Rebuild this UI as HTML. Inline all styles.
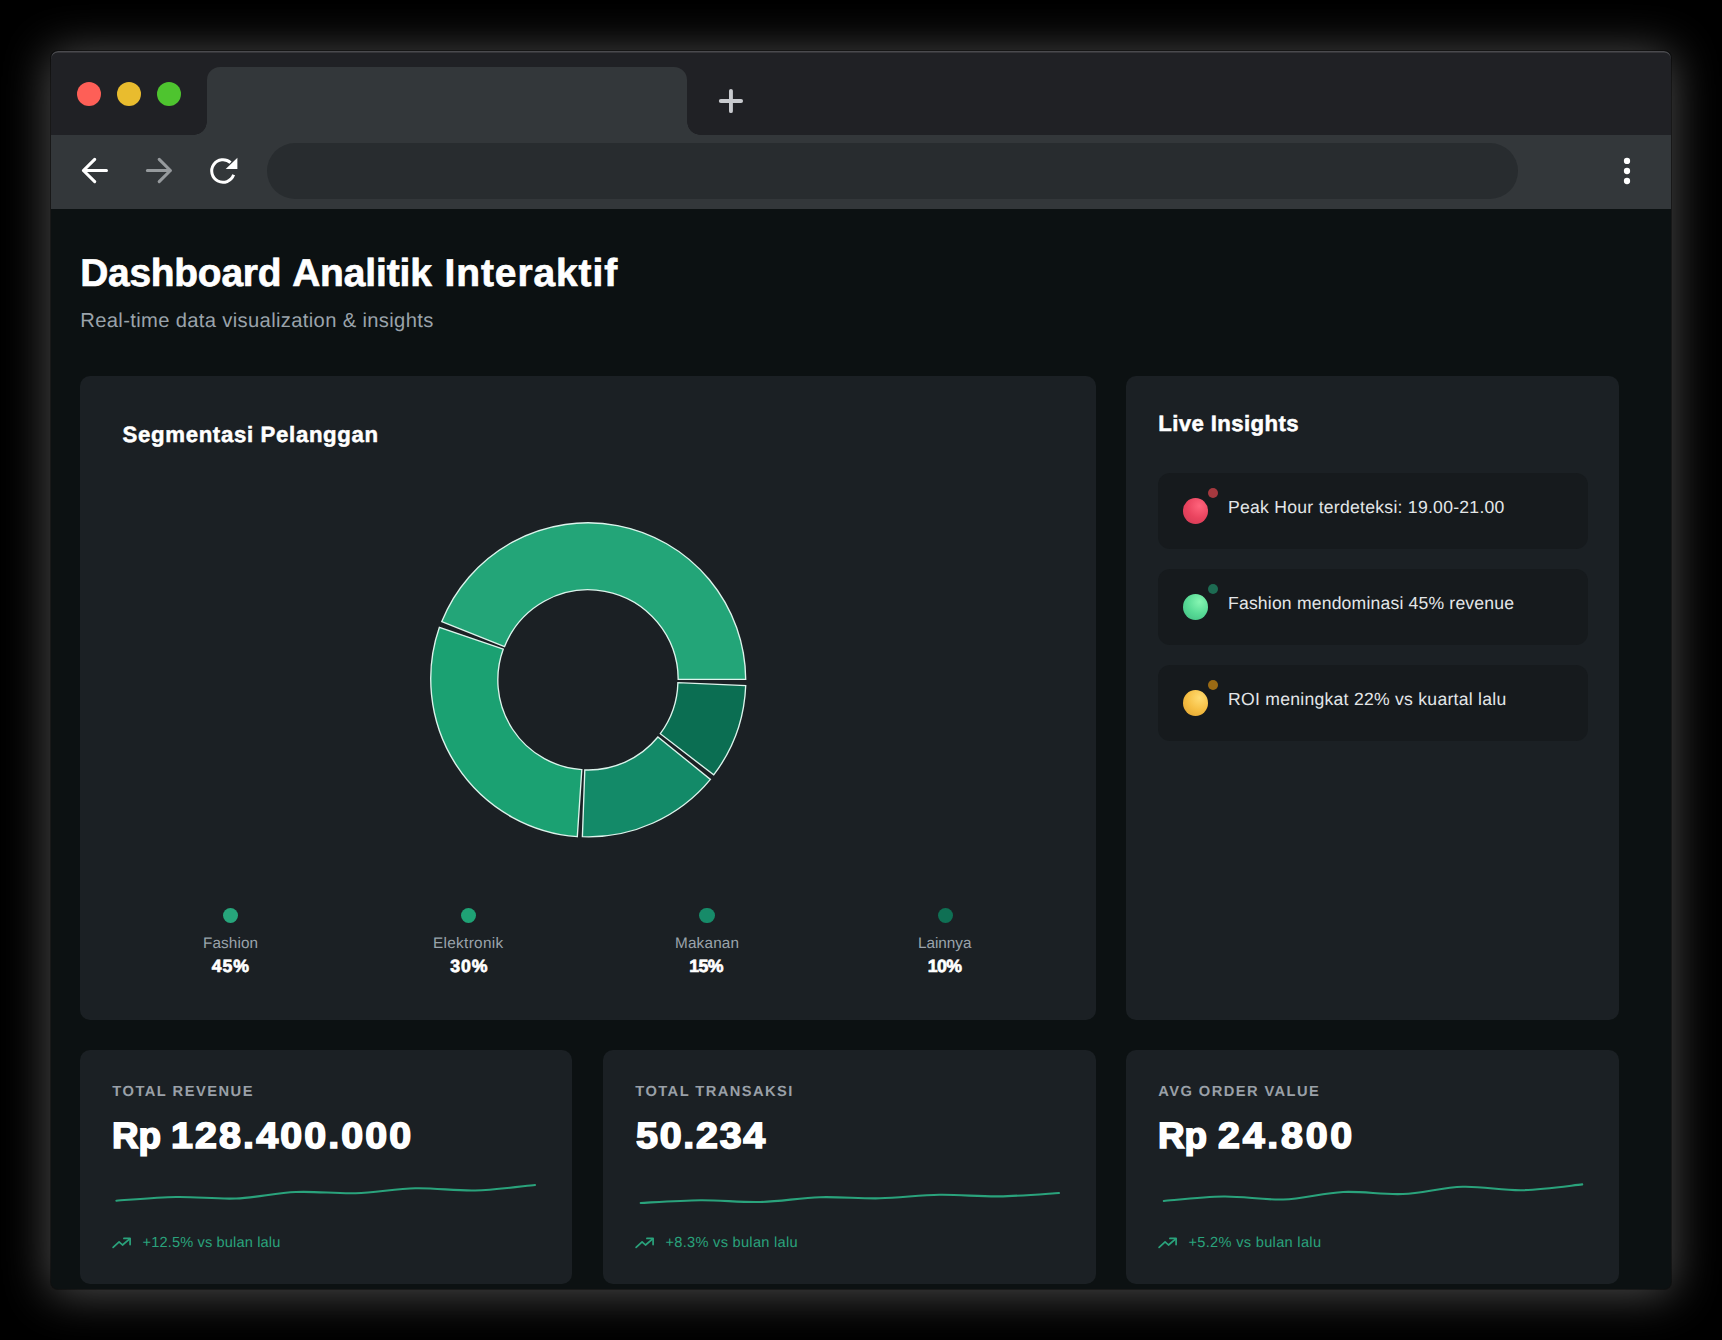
<!DOCTYPE html>
<html lang="id"><head><meta charset="utf-8"><title>Dashboard Analitik Interaktif</title>
<style>
html,body{margin:0;padding:0;background:#000;}
body{width:1722px;height:1340px;position:relative;overflow:hidden;font-family:"Liberation Sans",Arial,sans-serif;}
#win{position:absolute;left:51px;top:51px;width:1620px;height:1238px;border-radius:7px;background:#0c1112;overflow:hidden;
  box-shadow:0 0 0 1px rgba(0,0,0,.4),0 3px 46px 2px rgba(255,255,255,.3);}
.a{position:absolute;}
.g{position:absolute;left:0;top:0;margin:0;font-size:16px;font-weight:400;}
.t{position:absolute;margin:0;white-space:nowrap;line-height:1;text-rendering:geometricPrecision;}
#tabbar{position:absolute;left:0;top:0;width:1620px;height:84px;background:#202125;}
#hl{position:absolute;left:0;top:0;width:1620px;height:60px;border-radius:7px 7px 0 0;box-shadow:inset 0 1.5px 0 rgba(255,255,255,.19);}
#toolbar{position:absolute;left:0;top:84px;width:1620px;height:74px;background:#33373a;}
#tab{position:absolute;left:156px;top:16px;width:480px;height:68px;background:#33373a;border-radius:13px 13px 0 0;}
#tab:before,#tab:after{content:"";position:absolute;bottom:0;width:13px;height:13px;}
#tab:before{left:-13px;background:radial-gradient(circle at 0 0, rgba(0,0,0,0) 12.5px, #33373a 13px);}
#tab:after{right:-13px;background:radial-gradient(circle at 100% 0, rgba(0,0,0,0) 12.5px, #33373a 13px);}
.tl{position:absolute;top:31px;width:24px;height:24px;border-radius:50%;}
#url{position:absolute;left:216px;top:8px;width:1251px;height:56px;border-radius:28px;background:#282c2f;}
.card{position:absolute;background:#1b2024;border-radius:10px;}
.ins{position:absolute;left:1107px;width:430px;height:75.9px;border-radius:12px;background:#161a1d;}
</style></head>
<body>
<div id="win">
 <div id="tabbar">
  <div class="tl" style="left:26px;background:#fe5f57"></div>
  <div class="tl" style="left:66px;background:#e9bc2e"></div>
  <div class="tl" style="left:106px;background:#4ec42f"></div>
  <div id="tab"></div>
 </div>
 <div id="toolbar">
  <div id="url"></div>
 </div>

 <section class="card" style="left:29px;top:325px;width:1016px;height:644px"></section>
 <section class="card" style="left:1075px;top:325px;width:493px;height:644px"></section>
 <section class="card" style="left:29px;top:999px;width:492px;height:234px"></section>
 <section class="card" style="left:552px;top:999px;width:493px;height:234px"></section>
 <section class="card" style="left:1075px;top:999px;width:493px;height:234px"></section>

 <svg class="a" style="left:0;top:0" width="1620" height="1238" viewBox="51 51 1620 1238">
  <path d="M730.95 90.85V111.15M720.8 101H741.1" fill="none" stroke="#c8cace" stroke-width="3.9" stroke-linecap="round"/>
  <path d="M106.45 170.48H83.4M94.7 159.32L83.4 170.48L94.7 181.63" fill="none" stroke="#ffffff" stroke-width="3.1" stroke-linecap="round" stroke-linejoin="round"/>
  <path d="M147.4 170.48H170.4M159.2 159.32L170.4 170.48L159.2 181.63" fill="none" stroke="#969a9d" stroke-width="3.1" stroke-linecap="round" stroke-linejoin="round"/>
  <path d="M233.62 174.86A11.3 11.3 0 1 1 230.56 162.60" fill="none" stroke="#ffffff" stroke-width="3.0"/>
  <path d="M237.4 157.8V168.9H225.7Z" fill="#ffffff"/>
  <circle cx="1627" cy="160.97" r="3.15" fill="#ffffff"/>
  <circle cx="1627" cy="171.0" r="3.15" fill="#ffffff"/>
  <circle cx="1627" cy="181.0" r="3.15" fill="#ffffff"/>
  <polyline points="113.1,1247.4 119.1,1241.8 122.5,1245.0 129.7,1238.8" fill="none" stroke="#2aa37c" stroke-width="1.7" stroke-linecap="round" stroke-linejoin="round"/><polyline points="123.9,1238.4 130.1,1238.4 130.1,1244.6" fill="none" stroke="#2aa37c" stroke-width="1.7" stroke-linecap="round" stroke-linejoin="round"/><polyline points="636.1,1247.4 642.1,1241.8 645.5,1245.0 652.7,1238.8" fill="none" stroke="#2aa37c" stroke-width="1.7" stroke-linecap="round" stroke-linejoin="round"/><polyline points="646.9,1238.4 653.1,1238.4 653.1,1244.6" fill="none" stroke="#2aa37c" stroke-width="1.7" stroke-linecap="round" stroke-linejoin="round"/><polyline points="1159.1,1247.4 1165.1,1241.8 1168.5,1245.0 1175.7,1238.8" fill="none" stroke="#2aa37c" stroke-width="1.7" stroke-linecap="round" stroke-linejoin="round"/><polyline points="1169.9,1238.4 1176.1,1238.4 1176.1,1244.6" fill="none" stroke="#2aa37c" stroke-width="1.7" stroke-linecap="round" stroke-linejoin="round"/>
  <path d="M745.70 679.40 A157.65 157.65 0 0 0 441.80 621.60 L504.50 646.70 A90.0 90.0 0 0 1 678.20 679.40Z" fill="#23a578" stroke="#dcf4ec" stroke-width="1.35" stroke-linejoin="miter"/>
<path d="M439.40 627.30 A158.2 158.2 0 0 0 577.30 836.70 L581.80 769.60 A89.8 89.8 0 0 1 503.30 649.10Z" fill="#1ba172" stroke="#dcf4ec" stroke-width="1.35" stroke-linejoin="miter"/>
<path d="M582.40 836.70 A158.2 158.2 0 0 0 710.40 779.40 L657.90 737.00 A89.8 89.8 0 0 1 584.80 769.90Z" fill="#138a68" stroke="#dcf4ec" stroke-width="1.35" stroke-linejoin="miter"/>
<path d="M713.70 774.90 A158.2 158.2 0 0 0 745.70 685.70 L677.90 682.70 A89.8 89.8 0 0 1 660.30 733.70Z" fill="#0b6e52" stroke="#dcf4ec" stroke-width="1.35" stroke-linejoin="miter"/>
  <path d="M116.4 1200.7 C126.4 1200.1 156.3 1197.4 176.2 1197.0 C196.1 1196.6 216.1 1199.3 236.0 1198.5 C255.9 1197.7 275.9 1192.9 295.8 1192.0 C315.7 1191.1 335.7 1193.8 355.6 1193.2 C375.5 1192.6 395.5 1188.8 415.4 1188.3 C435.3 1187.8 455.3 1191.0 475.2 1190.5 C495.1 1190.0 525.0 1185.9 535.0 1185.0" fill="none" stroke="#2aa37c" stroke-width="2.1" stroke-linecap="round"/>
  <path d="M640.7 1203.0 C650.7 1202.5 680.5 1200.4 700.5 1200.2 C720.4 1200.0 740.3 1202.5 760.2 1202.0 C780.1 1201.5 800.1 1197.8 820.0 1197.2 C839.9 1196.6 859.8 1198.7 879.7 1198.3 C899.6 1197.9 919.6 1195.1 939.5 1194.8 C959.4 1194.5 979.3 1196.7 999.2 1196.4 C1019.2 1196.1 1049.0 1193.6 1059.0 1193.0" fill="none" stroke="#2aa37c" stroke-width="2.1" stroke-linecap="round"/>
  <path d="M1163.8 1201.0 C1173.8 1200.2 1203.6 1196.8 1223.6 1196.5 C1243.5 1196.2 1263.4 1200.2 1283.3 1199.5 C1303.3 1198.8 1323.2 1192.9 1343.1 1192.0 C1363.0 1191.1 1383.0 1194.9 1402.9 1194.0 C1422.8 1193.1 1442.7 1187.4 1462.7 1186.8 C1482.6 1186.2 1502.5 1190.6 1522.4 1190.2 C1542.4 1189.8 1572.2 1185.4 1582.2 1184.4" fill="none" stroke="#2aa37c" stroke-width="2.1" stroke-linecap="round"/>
 </svg>

 <div class="a" style="left:172.0px;top:856.5px;width:15.2px;height:15.2px;border-radius:50%;background:#27a57b"></div><div class="a" style="left:409.9px;top:856.5px;width:15.2px;height:15.2px;border-radius:50%;background:#1fa275"></div><div class="a" style="left:648.4px;top:856.5px;width:15.2px;height:15.2px;border-radius:50%;background:#178b69"></div><div class="a" style="left:886.7px;top:856.5px;width:15.2px;height:15.2px;border-radius:50%;background:#0f7054"></div>

 <div class="ins" style="top:421.8px"></div><div class="a" style="left:1132.1px;top:446.9px;width:25px;height:25.8px;border-radius:50%;background:radial-gradient(circle at 66% 30%, #ff647c 0%, #ea445f 50%, #cc3852 105%)"></div><div class="a" style="left:1156.9px;top:437.1px;width:10.4px;height:10.4px;border-radius:50%;background:#a5393f"></div>
 <div class="ins" style="top:517.8px"></div><div class="a" style="left:1132.1px;top:542.9px;width:25px;height:25.8px;border-radius:50%;background:radial-gradient(circle at 66% 30%, #86f5b2 0%, #58db96 50%, #3db77e 105%)"></div><div class="a" style="left:1156.9px;top:533.1px;width:10.4px;height:10.4px;border-radius:50%;background:#1d6b52"></div>
 <div class="ins" style="top:613.8px"></div><div class="a" style="left:1132.1px;top:638.9px;width:25px;height:25.8px;border-radius:50%;background:radial-gradient(circle at 66% 30%, #ffdc72 0%, #f6bf44 50%, #dc9e2c 105%)"></div><div class="a" style="left:1156.9px;top:629.1px;width:10.4px;height:10.4px;border-radius:50%;background:#9a6a14"></div>


<h1 class="g"><span class="t" id="h1a" style="left:29.25px;top:204.30px;font-size:38.9px;font-weight:700;color:#ffffff;letter-spacing:-0.247px;-webkit-text-stroke:0.7px #ffffff">Dashboard</span> <span class="t" id="h1b" style="left:241.15px;top:204.30px;font-size:38.9px;font-weight:700;color:#ffffff;letter-spacing:-0.105px;-webkit-text-stroke:0.7px #ffffff">Analitik</span> <span class="t" id="h1c" style="left:393.55px;top:204.30px;font-size:38.9px;font-weight:700;color:#ffffff;letter-spacing:0.934px;-webkit-text-stroke:0.7px #ffffff">Interaktif</span></h1><p class="t" id="sub" style="left:29.30px;top:259.80px;font-size:20.2px;font-weight:400;color:#9aa3ab;letter-spacing:0.342px">Real-time data visualization &amp; insights</p>
<h2 class="t" id="ct" style="left:71.55px;top:373.30px;font-size:22.2px;font-weight:700;color:#ffffff;letter-spacing:0.666px;-webkit-text-stroke:0.5px #ffffff">Segmentasi Pelanggan</h2>
<h2 class="t" id="li" style="left:1107.35px;top:362.20px;font-size:22.2px;font-weight:700;color:#ffffff;letter-spacing:0.377px;-webkit-text-stroke:0.5px #ffffff">Live Insights</h2>
<div class="t" id="i1" style="left:1177.00px;top:447.50px;font-size:17.6px;font-weight:400;color:#e3e6e8;letter-spacing:0.263px">Peak Hour terdeteksi: 19.00-21.00</div>
<div class="t" id="i2" style="left:1177.00px;top:543.50px;font-size:17.6px;font-weight:400;color:#e3e6e8;letter-spacing:0.177px">Fashion mendominasi 45% revenue</div>
<div class="t" id="i3" style="left:1177.00px;top:639.50px;font-size:17.6px;font-weight:400;color:#e3e6e8;letter-spacing:0.262px">ROI meningkat 22% vs kuartal lalu</div>
<div class="t" id="l1" style="left:152.00px;top:885.00px;font-size:15.3px;font-weight:400;color:#9aa3ab;letter-spacing:0.098px">Fashion</div>
<div class="t" id="l2" style="left:382.00px;top:885.00px;font-size:15.3px;font-weight:400;color:#9aa3ab;letter-spacing:0.332px">Elektronik</div>
<div class="t" id="l3" style="left:624.00px;top:885.00px;font-size:15.3px;font-weight:400;color:#9aa3ab;letter-spacing:0.180px">Makanan</div>
<div class="t" id="l4" style="left:867.00px;top:885.00px;font-size:15.3px;font-weight:400;color:#9aa3ab;letter-spacing:-0.013px">Lainnya</div>
<div class="t" id="p1" style="left:160.85px;top:906.90px;font-size:17.7px;font-weight:700;color:#ffffff;letter-spacing:0.813px;-webkit-text-stroke:0.7px #ffffff">45%</div>
<div class="t" id="p2" style="left:399.35px;top:906.90px;font-size:17.7px;font-weight:700;color:#ffffff;letter-spacing:0.813px;-webkit-text-stroke:0.7px #ffffff">30%</div>
<div class="t" id="p3" style="left:638.35px;top:906.90px;font-size:17.7px;font-weight:700;color:#ffffff;letter-spacing:-0.687px;-webkit-text-stroke:0.7px #ffffff">15%</div>
<div class="t" id="p4" style="left:876.85px;top:906.90px;font-size:17.7px;font-weight:700;color:#ffffff;letter-spacing:-0.687px;-webkit-text-stroke:0.7px #ffffff">10%</div>
<div class="t" id="k1" style="left:61.30px;top:1034.10px;font-size:14.7px;font-weight:700;color:#9aa0a8;letter-spacing:1.482px">TOTAL REVENUE</div>
<div class="t" id="k2" style="left:584.30px;top:1034.10px;font-size:14.7px;font-weight:700;color:#9aa0a8;letter-spacing:1.428px">TOTAL TRANSAKSI</div>
<div class="t" id="k3" style="left:1107.30px;top:1034.10px;font-size:14.7px;font-weight:700;color:#9aa0a8;letter-spacing:1.419px">AVG ORDER VALUE</div>
<div class="g"><span class="t" id="v1a" style="left:60.99px;top:1066.95px;font-size:36.5px;font-weight:700;color:#ffffff;letter-spacing:-0.001px;-webkit-text-stroke:1.6px #ffffff;transform:scaleX(1.0094);transform-origin:0 0">Rp</span> <span class="t" id="v1b" style="left:119.50px;top:1066.95px;font-size:36.5px;font-weight:700;color:#ffffff;letter-spacing:1.946px;-webkit-text-stroke:1.6px #ffffff;transform:scaleX(1.08);transform-origin:0 0">128.400.000</span></div><div class="t" id="v2" style="left:584.78px;top:1066.95px;font-size:36.5px;font-weight:700;color:#ffffff;letter-spacing:1.616px;-webkit-text-stroke:1.6px #ffffff;transform:scaleX(1.08);transform-origin:0 0">50.234</div>
<div class="g"><span class="t" id="v3a" style="left:1106.99px;top:1066.95px;font-size:36.5px;font-weight:700;color:#ffffff;letter-spacing:-0.001px;-webkit-text-stroke:1.6px #ffffff;transform:scaleX(1.0094);transform-origin:0 0">Rp</span> <span class="t" id="v3b" style="left:1167.28px;top:1066.95px;font-size:36.5px;font-weight:700;color:#ffffff;letter-spacing:2.534px;-webkit-text-stroke:1.6px #ffffff;transform:scaleX(1.08);transform-origin:0 0">24.800</span></div><div class="t" id="t1" style="left:91.50px;top:1185.20px;font-size:14.6px;font-weight:400;color:#2aa37c;letter-spacing:0.144px">+12.5% vs bulan lalu</div>
<div class="t" id="t2" style="left:614.50px;top:1185.20px;font-size:14.6px;font-weight:400;color:#2aa37c;letter-spacing:0.286px">+8.3% vs bulan lalu</div>
<div class="t" id="t3" style="left:1137.50px;top:1185.20px;font-size:14.6px;font-weight:400;color:#2aa37c;letter-spacing:0.308px">+5.2% vs bulan lalu</div>

 <div id="hl"></div>
</div>
</body></html>
